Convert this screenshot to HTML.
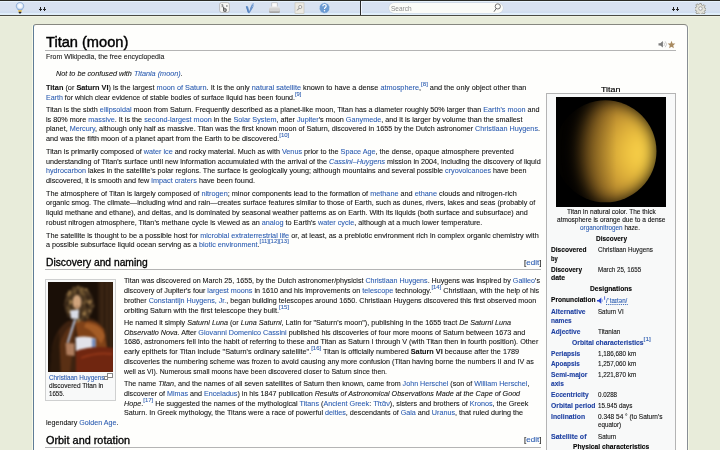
<!DOCTYPE html><html><head><meta charset="utf-8"><style>
*{margin:0;padding:0;box-sizing:border-box}
html,body{width:720px;height:450px;overflow:hidden;background:#e8ecda;font-family:"Liberation Sans",sans-serif;color:#111}
#tb{position:absolute;left:0;top:0;width:720px;height:16px;background:linear-gradient(#2a2a24 0px,#2a2a24 1px,#e6f2fc 1px,#e6f2fc 2px,#d8e2f1 2px,#d8e2f1 10px,#d1def0 12px,#d1def0 13px,#e0eefa 13.5px,#e0eefa 14.5px,#4a4a42 15px,#4a4a42 16px)}
#tb2{position:absolute;left:0;top:16px;width:720px;height:1px;background:#f0f2e2}
#box{position:absolute;left:33px;top:24px;width:655px;height:440px;background:#fefefc;border:1px solid #86877f;border-right-color:#888e94;border-left-color:#5f7c96;box-shadow:1px 0 0 #f6f9e6,-1px 0 0 #f8fae6;border-radius:3px 4px 0 0}
.l{position:absolute;white-space:nowrap;line-height:10px;transform-origin:0 0}
.m{font-size:7.5px;-webkit-text-stroke:0.08px currentColor}
.ib{font-size:6.5px;-webkit-text-stroke:0.1px currentColor}
.ib b{color:#000}
.ib a b{color:#1d3fa0}
.mk{display:inline-block;width:0;height:0;vertical-align:baseline}
a{color:#2a5bb0;text-decoration:none}
sup{font-size:6.2px;vertical-align:3.6px;line-height:0}
b{font-weight:bold}
.hr{position:absolute;height:1px;background:#b4b4b4}
</style></head><body>
<div id="tb"></div><div id="tb2"></div>
<div id="box"></div>
<div class="hr" style="left:45px;top:50px;width:631px"></div>
<div class="hr" style="left:45px;top:269px;width:496px"></div>
<div class="hr" style="left:45px;top:447px;width:496px"></div>
<!-- top-right icons -->
<svg style="position:absolute;left:657px;top:40px" width="20" height="9" viewBox="0 0 20 9">
 <path d="M1.5 3.2h1.8l2.6-2.2v6.6L3.3 5.6H1.5z" fill="#7c7c7c"/>
 <path d="M6.8 2.6q1.6 1.7 0 3.4M8.2 1.4q2.8 2.9 0 5.8" stroke="#c4c4c4" stroke-width="0.9" fill="none"/>
 <path d="M14.5 0.8l1.05 2.6 2.8.2-2.15 1.8.7 2.75-2.4-1.5-2.4 1.5.7-2.75-2.15-1.8 2.8-.2z" fill="#a88a60"/>
</svg>
<!-- infobox -->
<div style="position:absolute;left:546px;top:93px;width:130px;height:400px;background:#f8f9f9;border:1px solid #b4b4b4"></div>
<svg style="position:absolute;left:556px;top:97px" width="110" height="110" viewBox="0 0 110 110">
 <defs>
  <radialGradient id="tg" gradientUnits="userSpaceOnUse" cx="0" cy="0" r="1" gradientTransform="translate(86 56) scale(80 95)">
   <stop offset="0" stop-color="#fcd64e"/>
   <stop offset="0.2" stop-color="#f0c440"/>
   <stop offset="0.45" stop-color="#cc9c34"/>
   <stop offset="0.7" stop-color="#946822"/>
   <stop offset="1" stop-color="#5e4214"/>
  </radialGradient>
  <linearGradient id="tov" x1="0" y1="0" x2="1" y2="0"><stop offset="0.1" stop-color="#000" stop-opacity="0.45"/><stop offset="0.55" stop-color="#000" stop-opacity="0"/></linearGradient>
  <clipPath id="dc"><circle cx="49.5" cy="54.3" r="51"/></clipPath>
  <filter id="tblur" color-interpolation-filters="sRGB" x="-30%" y="-30%" width="160%" height="160%"><feGaussianBlur stdDeviation="8"/></filter>
 </defs>
 <rect width="110" height="110" fill="#000"/>
 <g clip-path="url(#dc)">
  <circle cx="49.5" cy="54.3" r="51" fill="#050300"/>
  <path d="M49.5 3.3A51 51 0 0 1 49.5 105.3A26 51 0 0 1 49.5 3.3Z" fill="url(#tg)" filter="url(#tblur)"/>
  <rect x="0" y="0" width="110" height="110" fill="url(#tov)"/>
  
 </g>
</svg>
<svg style="position:absolute;left:596px;top:296px" width="10" height="9" viewBox="0 0 10 9">
 <path d="M1 4h1.5l2.8-2.6v6.4L2.5 5.6H1z" fill="#2a48d0"/>
 <path d="M6 3.2q0.8 1.4 0 2.8" stroke="#6a84e0" stroke-width="0.7" fill="none"/>
 <path d="M8.6 0.6v3.2M8.6 0v0.4" stroke="#2a48d0" stroke-width="0.8"/>
</svg>
<!-- thumb -->
<div style="position:absolute;left:45px;top:279px;width:71px;height:122px;background:#f8f9f9;border:1px solid #cfd0d0"></div>
<svg style="position:absolute;left:48px;top:282px" width="65" height="90" viewBox="0 0 65 90">
 <defs><filter id="pbl" color-interpolation-filters="sRGB" x="-10%" y="-10%" width="120%" height="120%"><feGaussianBlur stdDeviation="0.95"/></filter>
 <clipPath id="pcl"><rect width="65" height="90"/></clipPath></defs>
 <rect width="65" height="90" fill="#1a0f07"/>
 <g filter="url(#pbl)" clip-path="url(#pcl)">
  <rect x="-5" y="-5" width="75" height="100" fill="#1a0f07"/>
  <rect x="50" y="-5" width="20" height="100" fill="#2e1c0e"/>
  <path d="M54 0v90M59 0v90M63 0v90" stroke="#4a301a" stroke-width="1.3"/>
  <path d="M2 95L4 66Q8 46 20 39L42 36Q57 40 59 58L63 95z" fill="#3e2210"/>
  <path d="M9 74Q12 54 21 45L27 46L22 90L11 90z" fill="#5a3014"/>
  <path d="M27 40Q46 35 56 47L59 67L32 67z" fill="#804218"/>
  <path d="M38 41Q53 42 57 54L53 62Q46 49 36 45z" fill="#a45c26"/>
  <path d="M1 95L4 68Q7 56 11 50L13 95z" fill="#2a180a"/>
  <ellipse cx="31" cy="22" rx="14.5" ry="17.5" fill="#4a3620"/>
  <circle cx="21.9" cy="11.3" r="1.9" fill="#7a5e36"/>
  <circle cx="30.1" cy="5.2" r="1.8" fill="#6e5430"/>
  <circle cx="37.7" cy="24.8" r="1.5" fill="#5e4628"/>
  <circle cx="31.2" cy="35.4" r="1.2" fill="#2e2012"/>
  <circle cx="29.8" cy="10.1" r="1.9" fill="#3a2818"/>
  <circle cx="44.6" cy="22.2" r="1.8" fill="#3a2818"/>
  <circle cx="38.0" cy="19.8" r="1.3" fill="#3a2818"/>
  <circle cx="41.8" cy="18.8" r="1.6" fill="#7a5e36"/>
  <circle cx="36.9" cy="37.7" r="2.0" fill="#3a2818"/>
  <circle cx="37.9" cy="15.4" r="1.4" fill="#5e4628"/>
  <circle cx="38.7" cy="18.0" r="1.3" fill="#5e4628"/>
  <circle cx="27.0" cy="12.0" r="1.4" fill="#5e4628"/>
  <circle cx="26.7" cy="36.0" r="1.5" fill="#3a2818"/>
  <circle cx="36.0" cy="21.1" r="1.4" fill="#7a5e36"/>
  <circle cx="21.8" cy="29.6" r="1.4" fill="#9a7848"/>
  <circle cx="38.1" cy="24.6" r="1.1" fill="#3a2818"/>
  <circle cx="31.3" cy="38.0" r="1.3" fill="#9a7848"/>
  <circle cx="24.3" cy="32.5" r="1.1" fill="#9a7848"/>
  <circle cx="30.9" cy="6.2" r="1.0" fill="#5e4628"/>
  <circle cx="36.8" cy="19.5" r="1.5" fill="#5e4628"/>
  <circle cx="26.4" cy="28.4" r="1.9" fill="#5e4628"/>
  <circle cx="22.4" cy="19.0" r="1.3" fill="#5e4628"/>
  <circle cx="34.6" cy="8.4" r="1.7" fill="#7a5e36"/>
  <circle cx="38.2" cy="21.8" r="1.1" fill="#6e5430"/>
  <circle cx="19.7" cy="12.0" r="1.2" fill="#6e5430"/>
  <circle cx="19.9" cy="13.1" r="1.7" fill="#9a7848"/>
  <circle cx="39.8" cy="35.7" r="1.0" fill="#7a5e36"/>
  <circle cx="17.6" cy="22.7" r="2.0" fill="#3a2818"/>
  <circle cx="38.9" cy="14.7" r="1.4" fill="#3a2818"/>
  <circle cx="39.0" cy="35.1" r="1.1" fill="#5e4628"/>
  <circle cx="41.4" cy="15.3" r="2.0" fill="#3a2818"/>
  <circle cx="20.8" cy="25.7" r="1.3" fill="#7a5e36"/>
  <circle cx="29.4" cy="34.5" r="1.1" fill="#3a2818"/>
  <circle cx="35.8" cy="10.0" r="1.6" fill="#3a2818"/>
  <circle cx="21.8" cy="22.0" r="1.5" fill="#6e5430"/>
  <circle cx="19.9" cy="20.7" r="1.4" fill="#2e2012"/>
  <circle cx="33.9" cy="6.8" r="1.6" fill="#7a5e36"/>
  <circle cx="39.7" cy="24.3" r="1.7" fill="#2e2012"/>
  <circle cx="29.0" cy="34.6" r="1.7" fill="#7a5e36"/>
  <circle cx="39.9" cy="19.0" r="1.6" fill="#3a2818"/>
  <circle cx="42.1" cy="23.0" r="1.3" fill="#5e4628"/>
  <circle cx="29.7" cy="32.4" r="1.6" fill="#2e2012"/>
  <circle cx="33.7" cy="11.3" r="1.3" fill="#7a5e36"/>
  <circle cx="40.2" cy="17.4" r="1.9" fill="#3a2818"/>
  <circle cx="25.6" cy="6.0" r="1.5" fill="#5e4628"/>
  <circle cx="38.3" cy="7.5" r="1.3" fill="#9a7848"/>
  <circle cx="41.7" cy="29.0" r="1.2" fill="#9a7848"/>
  <circle cx="33.2" cy="8.4" r="1.9" fill="#7a5e36"/>
  <circle cx="27.4" cy="34.8" r="1.3" fill="#7a5e36"/>
  <circle cx="38.6" cy="21.8" r="1.4" fill="#2e2012"/>
  <circle cx="26.4" cy="8.8" r="2.0" fill="#6e5430"/>
  <circle cx="38.2" cy="20.9" r="1.1" fill="#3a2818"/>
  <circle cx="41.4" cy="19.4" r="1.0" fill="#2e2012"/>
  <circle cx="21.6" cy="24.5" r="1.1" fill="#2e2012"/>
  <circle cx="34.5" cy="36.5" r="1.0" fill="#5e4628"/>
  <circle cx="35.7" cy="11.9" r="1.5" fill="#6e5430"/>
  <circle cx="28.2" cy="32.0" r="1.3" fill="#2e2012"/>
  <circle cx="18.6" cy="13.6" r="1.4" fill="#3a2818"/>
  <circle cx="35.6" cy="8.7" r="1.5" fill="#5e4628"/>
  <circle cx="36.3" cy="31.7" r="2.0" fill="#9a7848"/>
  <circle cx="42.4" cy="19.2" r="1.8" fill="#5e4628"/>
  <circle cx="24.6" cy="36.9" r="1.1" fill="#2e2012"/>
  <circle cx="21.5" cy="9.9" r="1.4" fill="#9a7848"/>
  <circle cx="41.6" cy="20.1" r="2.0" fill="#9a7848"/>
  <circle cx="20.6" cy="33.8" r="1.6" fill="#3a2818"/>
  <circle cx="30.1" cy="39.3" r="1.3" fill="#9a7848"/>
  <circle cx="45.0" cy="24.1" r="1.5" fill="#5e4628"/>
  <circle cx="28.6" cy="34.4" r="1.7" fill="#6e5430"/>
  <circle cx="39.0" cy="19.6" r="1.8" fill="#6e5430"/>
  <circle cx="22.6" cy="19.9" r="1.8" fill="#9a7848"/>
  <circle cx="31.2" cy="32.2" r="1.7" fill="#3a2818"/>
  <circle cx="28.6" cy="34.6" r="1.5" fill="#9a7848"/>
  <circle cx="40.0" cy="9.5" r="1.0" fill="#6e5430"/>
  <circle cx="37.1" cy="29.4" r="1.3" fill="#7a5e36"/>
  <circle cx="27.8" cy="34.7" r="1.3" fill="#9a7848"/>
  <circle cx="25.5" cy="7.5" r="1.0" fill="#3a2818"/>
  <ellipse cx="29" cy="20" rx="4.4" ry="7" fill="#d0a47c"/>
  <path d="M27.8 24.5h2.6" stroke="#7a4a30" stroke-width="0.7"/>
  <path d="M22 28.5L31 27.5L30.5 37L23 36.5z" fill="#d8dce6"/>
  <path d="M26 37.5L28.2 37.5L20.5 61L18.8 60.5z" fill="#b4c4de"/>
  <path d="M27.5 55.5Q38 53 47.5 56.5L47.5 69Q37.5 71 28 69z" fill="#e2e2ea"/>
  <path d="M44 56.5L47.5 56.5L47.5 69L44 69z" fill="#6e88bc"/>
  <path d="M17.5 61L26.5 61.5L26.5 74L18.5 73z" fill="#b07e5e"/>
  <path d="M28 69Q44 63 66 66L66 95L28 95z" fill="#702610"/>
  <path d="M33 76Q48 70 64 72" stroke="#923618" stroke-width="1.8" fill="none"/>
 </g>
</svg>
<svg style="position:absolute;left:104px;top:373px" width="9" height="7" viewBox="0 0 9 7">
 <rect x="3.5" y="0.5" width="5" height="4" fill="#fff" stroke="#888" stroke-width="1"/>
 <rect x="0.5" y="3.5" width="3" height="3" fill="#fff" stroke="#888" stroke-width="1"/>
</svg>
<!-- toolbar -->
<div style="position:absolute;left:360px;top:1px;width:1px;height:14px;background:#2a2a2a"></div>
<div style="position:absolute;left:361px;top:1px;width:1px;height:14px;background:#f0f6ff"></div>
<div style="position:absolute;left:389px;top:3px;width:114px;height:10px;border-radius:5px;background:#fbfcf8;box-shadow:0 0 0 0.5px #c8d2dc"></div>
<div style="position:absolute;left:391px;top:4px;font-size:7.4px;line-height:10px;color:#8c8c8c;font-family:'Liberation Sans',sans-serif;transform:scaleX(0.88);transform-origin:0 0">Search</div>
<svg style="position:absolute;left:493px;top:3px" width="9" height="10" viewBox="0 0 9 10">
 <circle cx="4.8" cy="3.4" r="2.6" fill="none" stroke="#666" stroke-width="0.9"/>
 <path d="M3.2 5.5L1 8.7" stroke="#555" stroke-width="0.9"/>
</svg>
<svg style="position:absolute;left:15px;top:2px" width="10" height="12" viewBox="0 0 10 12">
 <defs><radialGradient id="bg1" cx="0.5" cy="0.45" r="0.55"><stop offset="0" stop-color="#ffffff"/><stop offset="0.55" stop-color="#e8f0fa"/><stop offset="1" stop-color="#8fb0dc"/></radialGradient></defs>
 <path d="M5 0.5C2.6 0.5 1.2 2.2 1.2 4.1c0 1.7 1.3 2.6 1.9 3.9h3.8C7.5 6.7 8.8 5.8 8.8 4.1 8.8 2.2 7.4 0.5 5 0.5z" fill="url(#bg1)" stroke="#7fa2d0" stroke-width="0.6"/>
 <rect x="3.3" y="8" width="3.4" height="2" fill="#e0c060"/>
 <rect x="3.6" y="9.8" width="2.8" height="1.6" rx="0.8" fill="#2a2a2a"/>
</svg>
<svg style="position:absolute;left:38px;top:6px" width="9" height="6" viewBox="0 0 9 6">
 <path d="M2 1h1v2h1v1h-1v1h-1v-1h-1v-1h1zM6 1h1v2h1v1h-1v1h-1v-1h-1v-1h1z" fill="#222"/>
</svg>
<svg style="position:absolute;left:671px;top:6px" width="9" height="6" viewBox="0 0 9 6">
 <path d="M2 1h1v2h1v1h-1v1h-1v-1h-1v-1h1zM6 1h1v2h1v1h-1v1h-1v-1h-1v-1h1z" fill="#222"/>
</svg>
<svg style="position:absolute;left:694.5px;top:2.8px" width="11" height="11" viewBox="0 0 13 13">
 <g fill="#e2e2da" stroke="#8c8c84" stroke-width="0.9">
 <path d="M5.6 0.6h1.8l.4 1.8 1.3.6 1.6-1 1.3 1.3-1 1.6.6 1.3 1.8.4v1.8l-1.8.4-.6 1.3 1 1.6-1.3 1.3-1.6-1-1.3.6-.4 1.8H5.6l-.4-1.8-1.3-.6-1.6 1-1.3-1.3 1-1.6-.6-1.3-1.8-.4V5.6l1.8-.4.6-1.3-1-1.6 1.3-1.3 1.6 1 1.3-.6z"/>
 </g>
 <circle cx="6.5" cy="6.5" r="2.1" fill="#f4f6fa" stroke="#888" stroke-width="0.8"/>
</svg>
<svg style="position:absolute;left:219px;top:2px" width="11" height="11" viewBox="0 0 11 11">
 <rect x="0.6" y="0.6" width="9.8" height="9.8" rx="2" fill="#f6f6f4" stroke="#a8a8a8" stroke-width="0.7"/>
 <path d="M2.4 2.6h1.4v2.2H2.6M3.8 3.8H2.6" stroke="#555" stroke-width="0.6" fill="none"/>
 <path d="M7.2 3.2h1.3v1.6H7.2z" fill="#777"/>
 <path d="M4.7 4.8v4.4h2.4V6.9H4.7" stroke="#333" stroke-width="0.9" fill="none"/>
</svg>
<svg style="position:absolute;left:245px;top:2px" width="10" height="12" viewBox="0 0 10 12">
 <path d="M0.8 4.5Q2 3.6 3 4.6L4.4 9.2Q5 5.5 6.8 2.4Q8.2 0.6 9 1.6Q9.4 3 8 5.4Q6.2 8.6 4.4 11.2Q3.2 11.6 2.6 10.2z" fill="#6a94cc"/>
 <path d="M6.8 2.6Q8 1.2 8.8 2Q8.6 3.6 7.6 5" stroke="#b4cdec" stroke-width="0.9" fill="none"/>
 <path d="M1.6 4.6L3.4 10.4" stroke="#4a78b6" stroke-width="0.8"/>
</svg>
<svg style="position:absolute;left:268px;top:2px" width="13" height="12" viewBox="0 0 13 12">
 <defs><linearGradient id="prg" x1="0" y1="0" x2="0" y2="1"><stop offset="0" stop-color="#e8e8e8"/><stop offset="0.5" stop-color="#c8c8c8"/><stop offset="1" stop-color="#a0a0a0"/></linearGradient></defs>
 <rect x="3.8" y="0.8" width="5.4" height="4.5" fill="#fafafa" stroke="#b0b0b0" stroke-width="0.6"/>
 <path d="M1.2 6.2Q1.6 4.6 3 4.6h7Q11.4 4.6 11.8 6.2L12 9.5Q12 11 10.5 11H2.5Q1 11 1 9.5z" fill="url(#prg)"/>
 <path d="M1.5 8.2h10" stroke="#eeeeee" stroke-width="0.6"/>
</svg>
<svg style="position:absolute;left:294px;top:2px" width="11" height="12" viewBox="0 0 11 12">
 <rect x="1" y="0.8" width="9" height="10.6" fill="#ebe9e2" stroke="#c4c0b4" stroke-width="0.6"/>
 <circle cx="6.2" cy="5" r="1.6" fill="#f4f4f4" stroke="#8a8a8a" stroke-width="0.7"/>
 <path d="M5 6.3L3.2 8.4" stroke="#7a7a7a" stroke-width="1"/>
</svg>
<svg style="position:absolute;left:318px;top:1px" width="13" height="14" viewBox="0 0 13 14">
 <circle cx="6.5" cy="7" r="5.2" fill="#6a9ad2" stroke="#dce8f6" stroke-width="0.8" stroke-dasharray="1 0.6"/>
 <path d="M4.8 5.3Q4.8 3.5 6.5 3.5Q8.2 3.5 8.2 5.1Q8.2 6 7 6.7Q6.5 7 6.5 8" fill="none" stroke="#fff" stroke-width="1.2"/>
 <circle cx="6.5" cy="9.8" r="0.75" fill="#fff"/>
</svg>

<div class="l m" id="T0" style="left:45.5px;top:83.00px;;transform:scaleX(0.9761);"><b>Titan</b> (or <b>Saturn VI</b>) is the largest <a>moon of Saturn</a>. It is the only <a>natural satellite</a> known to have a dense <a>atmosphere</a>,<sup><a>[8]</a></sup> and the only object other than<span class="mk"></span></div><div class="l m" id="T1" style="left:45.5px;top:92.71px;;transform:scaleX(0.9373);"><a>Earth</a> for which clear evidence of stable bodies of surface liquid has been found.<sup><a>[9]</a></sup><span class="mk"></span></div><div class="l m" id="T2" style="left:45.5px;top:105.00px;;transform:scaleX(0.9619);">Titan is the sixth <a>ellipsoidal</a> moon from Saturn. Frequently described as a planet-like moon, Titan has a diameter roughly 50% larger than <a>Earth&#39;s moon</a> and<span class="mk"></span></div><div class="l m" id="T3" style="left:45.5px;top:114.71px;;transform:scaleX(0.9647);">is 80% more <a>massive</a>. It is the <a>second-largest moon</a> in the <a>Solar System</a>, after <a>Jupiter</a>'s moon <a>Ganymede</a>, and it is larger by volume than the smallest<span class="mk"></span></div><div class="l m" id="T4" style="left:45.5px;top:124.41px;;transform:scaleX(0.9605);">planet, <a>Mercury</a>, although only half as massive. Titan was the first known moon of Saturn, discovered in 1655 by the Dutch astronomer <a>Christiaan Huygens</a>.<span class="mk"></span></div><div class="l m" id="T5" style="left:45.5px;top:134.11px;;transform:scaleX(0.9697);">and was the fifth moon of a planet apart from the Earth to be discovered.<sup><a>[10]</a></sup><span class="mk"></span></div><div class="l m" id="T6" style="left:45.5px;top:147.00px;;transform:scaleX(0.9636);">Titan is primarily composed of <a>water ice</a> and rocky material. Much as with <a>Venus</a> prior to the <a>Space Age</a>, the dense, opaque atmosphere prevented<span class="mk"></span></div><div class="l m" id="T7" style="left:45.5px;top:156.71px;;transform:scaleX(0.9597);">understanding of Titan's surface until new information accumulated with the arrival of the <a><i>Cassini–Huygens</i></a> mission in 2004, including the discovery of liquid<span class="mk"></span></div><div class="l m" id="T8" style="left:45.5px;top:166.41px;;transform:scaleX(0.9571);"><a>hydrocarbon</a> lakes in the satellite's polar regions. The surface is geologically young; although mountains and several possible <a>cryovolcanoes</a> have been<span class="mk"></span></div><div class="l m" id="T9" style="left:45.5px;top:176.11px;;transform:scaleX(0.9677);">discovered, it is smooth and few <a>impact craters</a> have been found.<span class="mk"></span></div><div class="l m" id="T10" style="left:45.5px;top:188.50px;;transform:scaleX(0.9707);">The atmosphere of Titan is largely composed of <a>nitrogen</a>; minor components lead to the formation of <a>methane</a> and <a>ethane</a> clouds and nitrogen-rich<span class="mk"></span></div><div class="l m" id="T11" style="left:45.5px;top:198.21px;;transform:scaleX(0.9568);">organic smog. The climate—including wind and rain—creates surface features similar to those of Earth, such as dunes, rivers, lakes and seas (probably of<span class="mk"></span></div><div class="l m" id="T12" style="left:45.5px;top:207.91px;;transform:scaleX(0.9636);">liquid methane and ethane), and deltas, and is dominated by seasonal weather patterns as on Earth. With its liquids (both surface and subsurface) and<span class="mk"></span></div><div class="l m" id="T13" style="left:45.5px;top:217.61px;;transform:scaleX(0.9666);">robust nitrogen atmosphere, Titan's methane cycle is viewed as an <a>analog</a> to Earth's <a>water cycle</a>, although at a much lower temperature.<span class="mk"></span></div><div class="l m" id="T14" style="left:45.5px;top:230.71px;;transform:scaleX(0.9703);">The satellite is thought to be a possible host for <a>microbial extraterrestrial life</a> or, at least, as a prebiotic environment rich in complex organic chemistry with<span class="mk"></span></div><div class="l m" id="T15" style="left:45.5px;top:240.41px;;transform:scaleX(0.9606);">a possible subsurface liquid ocean serving as a <a>biotic environment</a>.<sup><a>[11]</a></sup><sup><a>[12]</a></sup><sup><a>[13]</a></sup><span class="mk"></span></div><div class="l m" id="T16" style="left:124.2px;top:275.80px;;transform:scaleX(0.9505);">Titan was discovered on March 25, 1655, by the Dutch astronomer/physicist <a>Christiaan Huygens</a>. Huygens was inspired by <a>Galileo</a>'s<span class="mk"></span></div><div class="l m" id="T17" style="left:124.2px;top:285.71px;;transform:scaleX(0.9586);">discovery of Jupiter's four <a>largest moons</a> in 1610 and his improvements on <a>telescope</a> technology.<sup><a>[14]</a></sup> Christiaan, with the help of his<span class="mk"></span></div><div class="l m" id="T18" style="left:124.2px;top:295.61px;;transform:scaleX(0.9545);">brother <a>Constantijn Huygens, Jr.</a>, began building telescopes around 1650. Christiaan Huygens discovered this first observed moon<span class="mk"></span></div><div class="l m" id="T19" style="left:124.2px;top:305.50px;;transform:scaleX(0.9735);">orbiting Saturn with the first telescope they built.<sup><a>[15]</a></sup><span class="mk"></span></div><div class="l m" id="T20" style="left:124.2px;top:318.00px;;transform:scaleX(0.9589);">He named it simply <i>Saturni Luna</i> (or <i>Luna Saturni</i>, Latin for "Saturn's moon"), publishing in the 1655 tract <i>De Saturni Luna</i><span class="mk"></span></div><div class="l m" id="T21" style="left:124.2px;top:327.71px;;transform:scaleX(0.9587);"><i>Observatio Nova</i>. After <a>Giovanni Domenico Cassini</a> published his discoveries of four more moons of Saturn between 1673 and<span class="mk"></span></div><div class="l m" id="T22" style="left:124.2px;top:337.41px;;transform:scaleX(0.9686);">1686, astronomers fell into the habit of referring to these and Titan as Saturn I through V (with Titan then in fourth position). Other<span class="mk"></span></div><div class="l m" id="T23" style="left:124.2px;top:347.11px;;transform:scaleX(0.9693);">early epithets for Titan include "Saturn's ordinary satellite".<sup><a>[16]</a></sup> Titan is officially numbered <b>Saturn VI</b> because after the 1789<span class="mk"></span></div><div class="l m" id="T24" style="left:124.2px;top:356.80px;;transform:scaleX(0.9568);">discoveries the numbering scheme was frozen to avoid causing any more confusion (Titan having borne the numbers II and IV as<span class="mk"></span></div><div class="l m" id="T25" style="left:124.2px;top:366.50px;;transform:scaleX(0.9196);">well as VI). Numerous small moons have been discovered closer to Saturn since then.<span class="mk"></span></div><div class="l m" id="T26" style="left:124.2px;top:379.30px;;transform:scaleX(0.9535);">The name <i>Titan</i>, and the names of all seven satellites of Saturn then known, came from <a>John Herschel</a> (son of <a>William Herschel</a>,<span class="mk"></span></div><div class="l m" id="T27" style="left:124.2px;top:388.96px;;transform:scaleX(0.9545);">discoverer of <a>Mimas</a> and <a>Enceladus</a>) in his 1847 publication <i>Results of Astronomical Observations Made at the Cape of Good</i><span class="mk"></span></div><div class="l m" id="T28" style="left:124.2px;top:398.61px;;transform:scaleX(0.9627);"><i>Hope</i>.<sup><a>[17]</a></sup> He suggested the names of the mythological <a>Titans</a> (<a>Ancient Greek</a>: <a>Τῖτᾶν</a>), sisters and brothers of <a>Kronos</a>, the Greek<span class="mk"></span></div><div class="l m" id="T29" style="left:124.2px;top:408.25px;;transform:scaleX(0.9594);">Saturn. In Greek mythology, the Titans were a race of powerful <a>deities</a>, descendants of <a>Gaia</a> and <a>Uranus</a>, that ruled during the<span class="mk"></span></div><div class="l m" id="T30" style="left:45.5px;top:418.00px;;transform:scaleX(0.9485);">legendary <a>Golden Age</a>.<span class="mk"></span></div><div class="l" id="T31" style="left:45.5px;top:38.00px;font-size:13.8px;color:#000;-webkit-text-stroke:0.4px #000;transform:scaleX(1.0592);">Titan (moon)<span class="mk"></span></div><div class="l" id="T32" style="left:45.7px;top:52.11px;font-size:7px;-webkit-text-stroke:0.06px #111;transform:scaleX(0.9944);">From Wikipedia, the free encyclopedia<span class="mk"></span></div><div class="l m" id="T33" style="left:55.5px;top:69.00px;;transform:scaleX(0.9682);"><i>Not to be confused with <a>Titania (moon)</a>.</i><span class="mk"></span></div><div class="l" id="T34" style="left:45.7px;top:257.61px;font-size:10px;color:#000;-webkit-text-stroke:0.3px #000;transform:scaleX(1.0269);">Discovery and naming<span class="mk"></span></div><div class="l" id="T35" style="left:45.7px;top:435.61px;font-size:10px;color:#000;-webkit-text-stroke:0.3px #000;transform:scaleX(1.0872);">Orbit and rotation<span class="mk"></span></div><div class="l m" id="T36" style="left:523.9px;top:257.50px;;transform:scaleX(1.0749);">[<a>edit</a>]<span class="mk"></span></div><div class="l m" id="T37" style="left:523.9px;top:434.91px;;transform:scaleX(1.0749);">[<a>edit</a>]<span class="mk"></span></div><div class="l ib" id="T38" style="left:48.9px;top:372.50px;;transform:scaleX(0.9765);"><a>Christiaan Huygens</a><span class="mk"></span></div><div class="l ib" id="T39" style="left:48.9px;top:380.61px;;transform:scaleX(1.0055);">discovered Titan in<span class="mk"></span></div><div class="l ib" id="T40" style="left:48.9px;top:388.50px;;transform:scaleX(0.9459);">1655.<span class="mk"></span></div><div class="l" id="T41" style="left:601.1px;top:84.80px;font-size:8px;color:#000;-webkit-text-stroke:0.15px #000;transform:scaleX(1.1086);">Titan<span class="mk"></span></div><div class="l ib" id="T42" style="left:566.8px;top:206.50px;;transform:scaleX(1.0062);">Titan in natural color. The thick<span class="mk"></span></div><div class="l ib" id="T43" style="left:556.8px;top:214.71px;;transform:scaleX(1.0075);">atmosphere is orange due to a dense<span class="mk"></span></div><div class="l ib" id="T44" style="left:580.3px;top:223.21px;;transform:scaleX(0.9747);"><a>organonitrogen</a> haze.<span class="mk"></span></div><div class="l ib" id="T45" style="left:595.6px;top:234.00px;;transform:scaleX(0.9975);"><b>Discovery</b><span class="mk"></span></div><div class="l ib" id="T46" style="left:550.5px;top:244.71px;;transform:scaleX(1.0129);"><b>Discovered</b><span class="mk"></span></div><div class="l ib" id="T47" style="left:550.5px;top:253.80px;;transform:scaleX(0.8955);"><b>by</b><span class="mk"></span></div><div class="l ib" id="T48" style="left:598px;top:244.71px;;transform:scaleX(0.9659);">Christiaan Huygens<span class="mk"></span></div><div class="l ib" id="T49" style="left:550.5px;top:264.50px;;transform:scaleX(0.9975);"><b>Discovery</b><span class="mk"></span></div><div class="l ib" id="T50" style="left:550.5px;top:273.00px;;transform:scaleX(1.0617);"><b>date</b><span class="mk"></span></div><div class="l ib" id="T51" style="left:598px;top:264.50px;;transform:scaleX(0.9541);">March 25, 1655<span class="mk"></span></div><div class="l ib" id="T52" style="left:589.9px;top:283.50px;;transform:scaleX(1.0315);"><b>Designations</b><span class="mk"></span></div><div class="l ib" id="T53" style="left:550.5px;top:295.00px;;transform:scaleX(1.0182);"><b>Pronunciation</b><span class="mk"></span></div><div class="l ib" id="T54" style="left:606px;top:296.00px;;transform:scaleX(0.9447);"><a style="border-bottom:1px dotted #2a5bb0">/ˈtaɪtən/</a><span class="mk"></span></div><div class="l ib" id="T55" style="left:550.5px;top:306.80px;;transform:scaleX(1.0295);"><a><b>Alternative</b></a><span class="mk"></span></div><div class="l ib" id="T56" style="left:550.5px;top:315.50px;;transform:scaleX(1.0044);"><a><b>names</b></a><span class="mk"></span></div><div class="l ib" id="T57" style="left:598px;top:306.80px;;transform:scaleX(0.9443);">Saturn VI<span class="mk"></span></div><div class="l ib" id="T58" style="left:550.5px;top:326.80px;;transform:scaleX(1.0171);"><a><b>Adjective</b></a><span class="mk"></span></div><div class="l ib" id="T59" style="left:598px;top:326.80px;;transform:scaleX(0.9742);">Titanian<span class="mk"></span></div><div class="l ib" id="T60" style="left:571.8px;top:337.50px;;transform:scaleX(1.0431);"><a><b>Orbital characteristics</b><sup>[1]</sup></a><span class="mk"></span></div><div class="l ib" id="T61" style="left:550.5px;top:348.91px;;transform:scaleX(1.0096);"><a><b>Periapsis</b></a><span class="mk"></span></div><div class="l ib" id="T62" style="left:598px;top:348.91px;;transform:scaleX(0.9698);">1,186,680 km<span class="mk"></span></div><div class="l ib" id="T63" style="left:550.5px;top:359.21px;;transform:scaleX(0.9841);"><a><b>Apoapsis</b></a><span class="mk"></span></div><div class="l ib" id="T64" style="left:598px;top:359.21px;;transform:scaleX(0.9698);">1,257,060 km<span class="mk"></span></div><div class="l ib" id="T65" style="left:550.5px;top:370.41px;;transform:scaleX(1.0281);"><a><b>Semi-major</b></a><span class="mk"></span></div><div class="l ib" id="T66" style="left:550.5px;top:379.00px;;transform:scaleX(1.0193);"><a><b>axis</b></a><span class="mk"></span></div><div class="l ib" id="T67" style="left:598px;top:370.41px;;transform:scaleX(0.9698);">1,221,870 km<span class="mk"></span></div><div class="l ib" id="T68" style="left:550.5px;top:390.21px;;transform:scaleX(1.0228);"><a><b>Eccentricity</b></a><span class="mk"></span></div><div class="l ib" id="T69" style="left:598px;top:390.21px;;transform:scaleX(0.9603);">0.0288<span class="mk"></span></div><div class="l ib" id="T70" style="left:550.5px;top:401.30px;;transform:scaleX(1.0440);"><a><b>Orbital period</b></a><span class="mk"></span></div><div class="l ib" id="T71" style="left:598px;top:401.30px;;transform:scaleX(0.9712);">15.945 days<span class="mk"></span></div><div class="l ib" id="T72" style="left:550.5px;top:411.91px;;transform:scaleX(1.0492);"><a><b>Inclination</b></a><span class="mk"></span></div><div class="l ib" id="T73" style="left:598px;top:411.91px;;transform:scaleX(0.9977);">0.348 54 ° (to Saturn's<span class="mk"></span></div><div class="l ib" id="T74" style="left:598px;top:420.41px;;transform:scaleX(0.9579);">equator)<span class="mk"></span></div><div class="l ib" id="T75" style="left:550.5px;top:431.91px;;transform:scaleX(1.0798);"><a><b>Satellite of</b></a><span class="mk"></span></div><div class="l ib" id="T76" style="left:598px;top:431.91px;;transform:scaleX(0.9553);">Saturn<span class="mk"></span></div><div class="l ib" id="T77" style="left:573px;top:442.41px;;transform:scaleX(1.0300);"><b>Physical characteristics</b><span class="mk"></span></div>
</body></html>
